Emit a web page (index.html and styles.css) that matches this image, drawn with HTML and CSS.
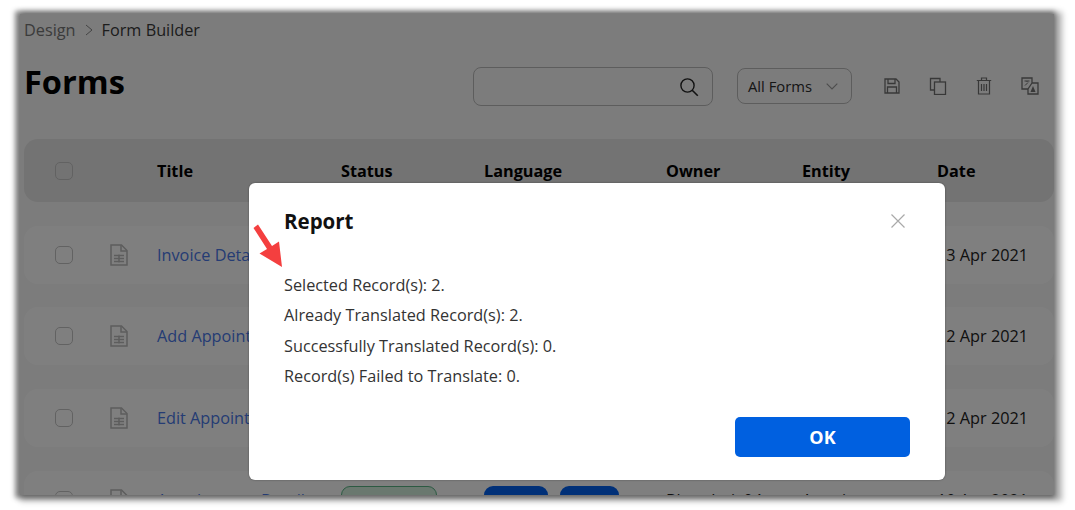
FILE: index.html
```html
<!DOCTYPE html>
<html lang="en">
<head>
<meta charset="utf-8">
<title>Forms</title>
<link rel="stylesheet" href="styles.css">
</head>
<body>
<div class="shot">
  <main class="page">
    <nav class="crumbs"><span class="crumb-parent">Design</span>
      <svg class="crumb-sep" viewBox="0 0 8 12" width="8" height="12"><path d="M1 1l6 5-6 5" fill="none" stroke="currentColor" stroke-width="1"/></svg>
      <span class="crumb-current">Form Builder</span></nav>
    <header class="head">
      <h1 class="title">Forms</h1>
      <div class="search">
        <svg viewBox="0 0 20 20" width="20" height="20"><circle cx="8.500" cy="8.500" r="6.600" fill="none" stroke="currentColor" stroke-width="1.400"/><path d="M13.200 13.200l5.600 5.600" stroke="currentColor" stroke-width="1.600" fill="none"/></svg>
      </div>
      <div class="select"><span>All Forms</span>
        <svg viewBox="0 0 12 7" width="12" height="7"><path d="M.7.7L6 6l5.300-5.300" fill="none" stroke="currentColor" stroke-width="1.100"/></svg>
      </div>
      <div class="tools">
        <svg viewBox="0 0 16 16" width="16" height="16"><path d="M1 1h11l3 3v11H1z M4 1v4.500h7V1 M3.500 15V9h9v6" fill="none" stroke="currentColor" stroke-width="1.300"/></svg>
        <svg viewBox="0 0 18 18" width="18" height="18"><path d="M5 13H1.500V1.500H11V5" fill="none" stroke="currentColor" stroke-width="1.300"/><rect x="5.500" y="5" width="11" height="12.500" fill="none" stroke="currentColor" stroke-width="1.300"/></svg>
        <svg viewBox="0 0 16 18" width="16" height="18"><path d="M2.500 4v13h11V4 M.8 3.500h14.400 M5.500 3.500V1h5v2.500 M5.500 7v7 M8 7v7 M10.500 7v7" fill="none" stroke="currentColor" stroke-width="1.200"/></svg>
        <svg viewBox="0 0 18 18" width="18" height="18"><path d="M1 1h10v5h6v11H7v-5H1z M7 12l4-6" fill="none" stroke="currentColor" stroke-width="1.300"/><path d="M9.500 15l2.500-6 2.500 6z" fill="currentColor"/><path d="M3.500 4h5M6 4v1M4 8.500l3-3" fill="none" stroke="currentColor"/></svg>
      </div>
    </header>
    <section class="table">
      <div class="row row-head">
        <span class="check"></span><span></span>
        <span>Title</span><span>Status</span><span>Language</span><span>Owner</span><span>Entity</span><span>Date</span>
      </div>
      <div class="row">
        <span class="check"></span>
        <svg class="doc" viewBox="0 0 18 22" width="18" height="22"><use href="#doc"/></svg>
        <a class="link">Invoice Details</a><span></span><span></span><span></span><span></span><span>13 Apr 2021</span>
      </div>
      <div class="row">
        <span class="check"></span>
        <svg class="doc" viewBox="0 0 18 22" width="18" height="22"><use href="#doc"/></svg>
        <a class="link">Add Appointment</a><span></span><span></span><span></span><span></span><span>12 Apr 2021</span>
      </div>
      <div class="row">
        <span class="check"></span>
        <svg class="doc" viewBox="0 0 18 22" width="18" height="22"><use href="#doc"/></svg>
        <a class="link">Edit Appointment</a><span></span><span></span><span></span><span></span><span>12 Apr 2021</span>
      </div>
      <div class="row">
        <span class="check"></span>
        <svg class="doc" viewBox="0 0 18 22" width="18" height="22"><use href="#doc"/></svg>
        <a class="link">Appointment Details</a>
        <span class="pill pill-green"></span>
        <span class="langs"><span class="pill pill-blue lang-a"></span><span class="pill pill-blue lang-b"></span></span>
        <span>Bhandari, 04</span><span>Appointment</span><span>10 Apr 2021</span>
      </div>
    </section>
    <svg class="defs" width="0" height="0"><defs><g id="doc" fill="none" stroke="currentColor" stroke-width="1.500"><path d="M1 1h10.500L17 6.500V21H1z"/><path d="M11 1v6h6"/><path d="M4 11.500h10M4 14.500h10M4 17.500h10M9 10.500v8" stroke-width="1.500"/></g></defs></svg>
  </main>
  <div class="overlay"></div>
  <div class="modal">
    <div class="modal-head">
      <h2 class="modal-title">Report</h2>
      <svg class="close" viewBox="0 0 14 14" width="14" height="14"><path d="M.5.5l13 13M13.500.5l-13 13" stroke="currentColor" stroke-width="1.200" fill="none"/></svg>
    </div>
    <div class="modal-body">
      <p>Selected Record(s): 2.</p>
      <p>Already Translated Record(s): 2.</p>
      <p>Successfully Translated Record(s): 0.</p>
      <p>Record(s) Failed to Translate: 0.</p>
    </div>
    <div class="modal-foot"><button class="ok">OK</button></div>
  </div>
  <svg class="arrow" viewBox="0 0 34 48" width="34" height="48"><path d="M3.500 6L8 2.500 22 24l7-4.500L32 45 9.500 31.500 17 27z" fill="#f43f3f"/></svg>
</div>
</body>
</html>
```
FILE: styles.css
```css
* { box-sizing: border-box; }
html, body { margin: 0; height: 100%; background: #fff; overflow: hidden; }
body { font-family: "Open Sans", "Noto Sans", sans-serif; color: #1d1d1d; }

.shot {
  position: relative;
  width: 1034px;
  height: 481px;
  margin: 14px 0 0 20px;
  box-shadow: -2px 0 5px 3px rgba(0,0,0,.45), 4px 2px 6px 4px rgba(0,0,0,.3);
}
.page {
  height: 481px;
  overflow: hidden;
  background: #f8f8f8;
  padding: 4px 0 0 4px;
}
.overlay { position: absolute; inset: 0; background: rgba(0,0,0,.5); }

.crumbs { display: flex; align-items: center; height: 24px; font-size: 16.250px; color: #3a3a3a; }
.crumb-parent { color: #777; }
.crumb-sep { margin: 0 9px; color: #888; }

.head { display: flex; align-items: flex-start; margin-top: 20px; height: 48px; }
.title { margin: 0; font-size: 32.500px; font-weight: 700; color: #000; width: 449px; line-height: 40px; }
.search {
  width: 240px; height: 39px; margin-top: 5px; border: 1px solid #bbb; border-radius: 8px;
  display: flex; align-items: center; justify-content: flex-end; padding-right: 13px; color: #222;
}
.select {
  width: 115px; height: 36px; margin-top: 6px; margin-left: 24px; border: 1px solid #bbb; border-radius: 8px;
  display: flex; align-items: center; justify-content: space-between; padding: 0 13px 0 10px;
  font-size: 14.800px; color: #2c2c2c;
}
.select svg { color: #999; }
.tools { display: flex; align-items: center; gap: 29px; margin-top: 15px; margin-left: 32px; color: #707070; }

.table { display: flex; flex-direction: column; gap: 23.500px; margin-top: 29px; }
.row {
  display: grid;
  grid-template-columns: 86px 47px 184px 143px 182px 136px 135px 1fr;
  align-items: center;
  height: 58.200px;
  background: #fff;
  border-radius: 14px;
  font-size: 16.250px;
  color: #222;
}
.row-head { height: 63px; background: #e6e6e6; font-weight: 700; color: #000; }
.check {
  width: 18px; height: 18px; margin-left: 31px;
  border: 1px solid #c4c4c4; border-radius: 5px;
}
.doc { color: #bbb; }
.link { color: #4a78e8; white-space: nowrap; }
.pill { display: block; height: 27px; border-radius: 9px; }
.pill-green { width: 96px; background: #d5f0df; border: 1px solid #58b585; }
.langs { display: flex; gap: 12px; }
.pill-blue { background: #0060f0; }
.lang-a { width: 64px; }
.lang-b { width: 59px; }
.defs { position: absolute; }

.modal {
  position: absolute;
  left: 229px; top: 169px;
  width: 696px; height: 297px;
  background: #fff;
  border-radius: 6px;
  box-shadow: 0 0 2px rgba(0,0,0,.4);
  padding: 23px 35px 23px;
  display: flex;
  flex-direction: column;
}
.modal-head { display: flex; align-items: center; justify-content: space-between; height: 30px; padding-right: 5px; }
.modal-title { margin: 0; font-size: 20.500px; font-weight: 700; color: #111; }
.close { color: #a9a9a9; }
.modal-body { margin-top: 37.600px; font-size: 16.250px; color: #333; }
.modal-body p { margin: 0; height: 30.500px; line-height: 22px; }
.modal-foot { margin-top: auto; display: flex; justify-content: flex-end; }
.ok {
  width: 175px; height: 40px; border: 0; border-radius: 5px;
  background: #0060e0; color: #fff; font: 700 18px "Open Sans", sans-serif;
}
.arrow { position: absolute; left: 230px; top: 208px; }
```
